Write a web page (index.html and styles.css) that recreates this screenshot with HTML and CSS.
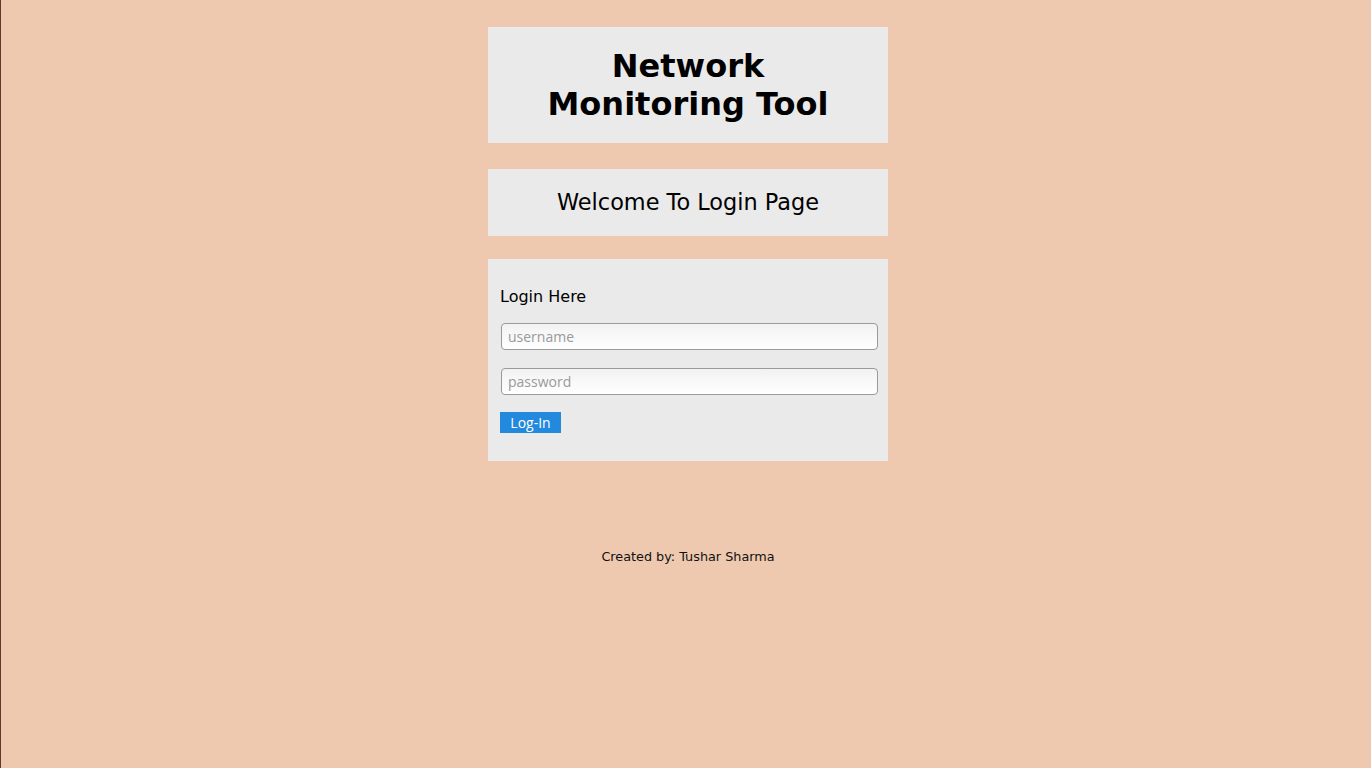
FILE: index.html
```html
<!DOCTYPE html>
<html>
<head>
<meta charset="utf-8">
<title>Network Monitoring Tool</title>
<link rel="stylesheet" href="styles.css">
</head>
<body>
<div class="page">
  <header class="box title-box">
    <h1>Network<br>Monitoring Tool</h1>
  </header>
  <section class="box welcome-box">
    <h2>Welcome To Login Page</h2>
  </section>
  <form class="box login-box">
    <h3>Login Here</h3>
    <input class="field" type="text" placeholder="username">
    <input class="field" type="password" placeholder="password">
    <button class="btn" type="button">Log-In</button>
  </form>
  <footer class="footer">Created by: Tushar Sharma</footer>
</div>
</body>
</html>
```
FILE: styles.css
```css
html, body {
  margin: 0;
  padding: 0;
  height: 100%;
}
body {
  background: #eec9af;
  border-left: 1px solid #5b3b2b;
  font-family: "DejaVu Sans", sans-serif;
  color: #000;
  box-sizing: border-box;
}
.page {
  display: flex;
  flex-direction: column;
  align-items: center;
  padding-top: 27px;
  padding-left: 4px;
}
.box {
  width: 400px;
  background: #eaeaea;
  box-sizing: border-box;
}
.title-box {
  height: 116px;
  display: flex;
  align-items: center;
  justify-content: center;
}
.title-box h1 {
  margin: 0;
  font-size: 32px;
  line-height: 38px;
  font-weight: bold;
  text-align: center;
}
.welcome-box {
  margin-top: 26px;
  height: 67px;
  display: flex;
  align-items: center;
  justify-content: center;
}
.welcome-box h2 {
  margin: 0;
  font-size: 22.4px;
  font-weight: normal;
  padding-bottom: 1px;
}
.login-box {
  margin-top: 23px;
  height: 202px;
  padding: 28px 10px 0 12px;
  display: flex;
  flex-direction: column;
  align-items: flex-start;
}
.login-box h3 {
  margin: 0 0 16px 0;
  font-size: 16px;
  line-height: 20px;
  font-weight: normal;
}
.field {
  width: 377px;
  height: 27px;
  margin: 0 0 18px 1px;
  box-sizing: border-box;
  border: 1px solid #9a9a9a;
  border-radius: 4px;
  background: linear-gradient(#f2f2f2, #ffffff);
  padding: 0 6px;
  font-family: "Open Sans", "Noto Sans", sans-serif;
  font-size: 14px;
  color: #333;
  outline: none;
}
.field::placeholder {
  color: #999;
}
.btn {
  width: 61px;
  height: 21px;
  margin: -1px 0 0 0;
  padding: 0;
  border: none;
  background: #2289dd;
  color: #fff;
  font-family: "Open Sans", "Noto Sans", sans-serif;
  font-size: 14px;
  line-height: 21px;
}
.footer {
  margin-top: 88px;
  font-size: 12.8px;
  line-height: 16px;
  color: #111;
}
```
